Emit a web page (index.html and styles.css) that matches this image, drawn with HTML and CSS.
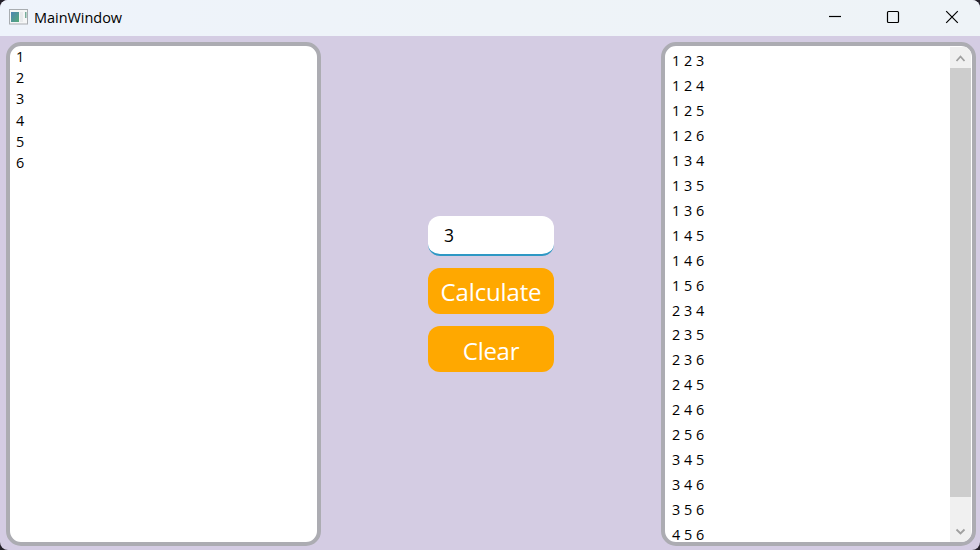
FILE: index.html
```html
<!DOCTYPE html>
<html lang="en">
<head>
<meta charset="utf-8">
<title>MainWindow</title>
<link rel="stylesheet" href="styles.css">
</head>
<body>
<div class="window">
  <header class="titlebar">
    <svg class="app-icon" width="20" height="16" viewBox="0 0 20 16">
      <defs><linearGradient id="g" x1="0" y1="0" x2="1" y2="1"><stop offset="0" stop-color="#4c84b4"/><stop offset="1" stop-color="#55aa78"/></linearGradient></defs>
      <rect x=".5" y=".5" width="18" height="14.5" fill="#f5f6f7" stroke="#a9adb1"/>
      <rect x="2" y="3" width="8" height="10" fill="url(#g)"/>
      <rect x="11" y="3" width="3" height="10" fill="#e8eaec"/>
      <rect x="16" y="3" width="1.5" height="6" fill="#79ad9b"/>
    </svg>
    <span class="title">MainWindow</span>
    <div class="controls">
      <svg width="58" height="34" viewBox="0 0 58 34"><path d="M23 16.5h12"/></svg>
      <svg width="58" height="34" viewBox="0 0 58 34"><rect x="23.5" y="11.5" width="11" height="11" rx="1"/></svg>
      <svg width="58" height="34" viewBox="0 0 58 34"><path d="M24.2 11.2l11.6 11.6M35.8 11.2L24.2 22.8"/></svg>
    </div>
  </header>
  <main class="content">
    <section class="panel source">
      <div>1</div><div>2</div><div>3</div><div>4</div><div>5</div><div>6</div>
    </section>
    <section class="actions">
      <input class="count" type="text" value="3">
      <button class="action calculate">Calculate</button>
      <button class="action">Clear</button>
    </section>
    <section class="panel results">
      <div class="list">
        <div>1 2 3</div><div>1 2 4</div><div>1 2 5</div><div>1 2 6</div><div>1 3 4</div>
        <div>1 3 5</div><div>1 3 6</div><div>1 4 5</div><div>1 4 6</div><div>1 5 6</div>
        <div>2 3 4</div><div>2 3 5</div><div>2 3 6</div><div>2 4 5</div><div>2 4 6</div>
        <div>2 5 6</div><div>3 4 5</div><div>3 4 6</div><div>3 5 6</div><div>4 5 6</div>
      </div>
      <div class="scrollbar">
        <svg width="21" height="21" viewBox="0 0 21 21"><path d="M6.5 14l4-4.5 4 4.5"/></svg>
        <div class="thumb"></div>
        <svg class="down" width="21" height="21" viewBox="0 0 21 21"><path d="M6.5 8.5l4 4 4-4"/></svg>
      </div>
    </section>
  </main>
</div>
</body>
</html>
```
FILE: styles.css
```css
* { box-sizing: border-box; }
body {
  margin: 0;
  background: #24202a;
  font-family: "Open Sans", "Noto Sans", sans-serif;
  color: #000;
}
.window {
  width: 980px;
  height: 550px;
  display: flex;
  flex-direction: column;
  overflow: hidden;
  border-radius: 8px;
  background: #d4cce3;
}
.titlebar {
  height: 36px;
  flex: none;
  display: flex;
  align-items: flex-start;
  background: linear-gradient(90deg, #eef3fb, #eef3f8 50%, #eef3f7);
}
.app-icon { margin: 9px 0 0 9px; }
.title {
  margin-left: 5px;
  font-size: 14.5px;
  line-height: 35px;
  letter-spacing: -.04px;
}
.controls { display: flex; margin-left: auto; }
.controls svg { fill: none; stroke: #000; stroke-width: 1.2; }
.content {
  flex: 1;
  min-height: 0;
  display: flex;
  justify-content: space-between;
  padding: 6px 4px 4px 6px;
}
.panel {
  width: 315px;
  height: 504px;
  border: 4px solid #acacb2;
  border-radius: 15px;
  background: #fff;
  overflow: hidden;
  font-size: 14.4px;
}
.source { padding: 0 6px; line-height: 21.2px; }
.actions {
  width: 126px;
  display: flex;
  flex-direction: column;
  justify-content: center;
  gap: 12px;
}
.count, .action {
  width: 126px;
  border: 0;
  border-radius: 12px;
  font-family: inherit;
}
.count {
  height: 40px;
  padding: 0 15px 0 16px;
  background: #fff;
  border-bottom: 2px solid #2e98c4;
  font-size: 17.5px;
  outline: none;
}
.action {
  height: 46px;
  padding: 3px 0 0;
  background: #ffa800;
  color: #fff;
  font-size: 24px;
  letter-spacing: -.3px;
}
.calculate { padding-top: 1px; letter-spacing: -.15px; }
.results { display: flex; justify-content: space-between; }
.list { padding: 3px 0 0 7px; line-height: 24.95px; }
.scrollbar {
  width: 21px;
  height: 495px;
  margin: 1px 1px 0 0;
  display: flex;
  flex-direction: column;
  background: #f0f0f0;
}
.scrollbar svg { flex: none; fill: none; stroke: #a0a0a0; stroke-width: 1.8; }
.thumb { height: 429px; background: #cdcdcd; }
.down { margin-top: auto; }
```
